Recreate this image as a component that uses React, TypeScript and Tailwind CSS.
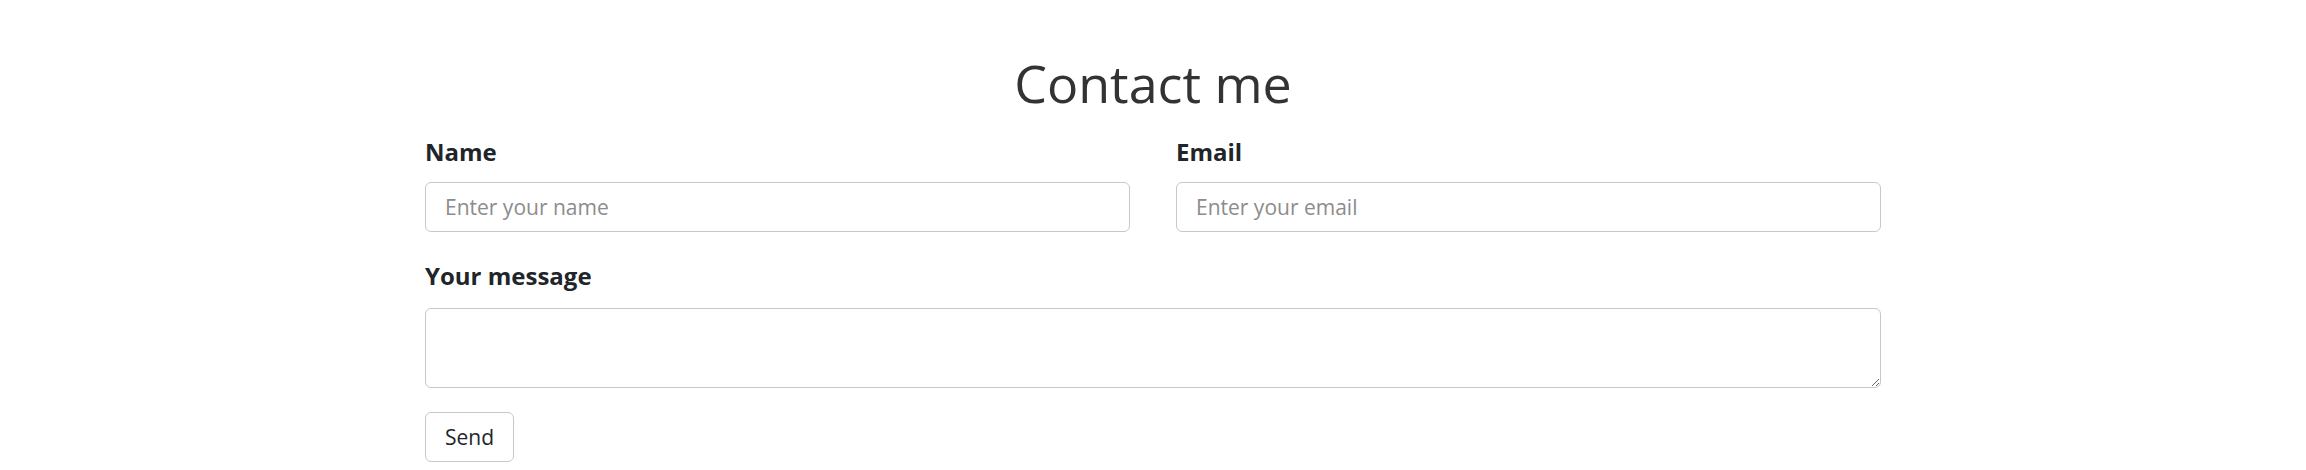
export default function App() {
  return (
    <div className="min-h-[470px] bg-white font-['Open_Sans',sans-serif] text-[#212529]">
      <div className="mx-auto w-[1456px] pt-[52px]">
        <h1 className="text-center text-[52px] font-normal leading-[62px] tracking-[0px] text-[#333333]">
          Contact me
        </h1>
        <form className="mt-[22px]">
          <div className="grid grid-cols-2 gap-x-[46px]">
            <div className="flex flex-col">
              <label className="mb-[14px] text-[24px] font-bold leading-[32px]">Name</label>
              <input
                type="text"
                placeholder="Enter your name"
                className="h-[50px] rounded-[6px] border border-[#c8c8c8] px-[19px] text-[21px] outline-none placeholder:text-[#8c8c8c]"
              />
            </div>
            <div className="flex flex-col">
              <label className="mb-[14px] text-[24px] font-bold leading-[32px]">Email</label>
              <input
                type="email"
                placeholder="Enter your email"
                className="h-[50px] rounded-[6px] border border-[#c8c8c8] px-[19px] text-[21px] outline-none placeholder:text-[#8c8c8c]"
              />
            </div>
          </div>
          <div className="mt-[28px] flex flex-col">
            <label className="mb-[16px] text-[24px] font-bold leading-[32px]">Your message</label>
            <textarea className="h-[80px] rounded-[6px] border border-[#c8c8c8] px-[19px] py-[8px] text-[21px] outline-none" />
          </div>
          <button
            type="button"
            className="mt-[24px] h-[50px] rounded-[6px] border border-[#c8c8c8] bg-white px-[19px] text-[21px] leading-none"
          >
            Send
          </button>
        </form>
      </div>
    </div>
  );
}
